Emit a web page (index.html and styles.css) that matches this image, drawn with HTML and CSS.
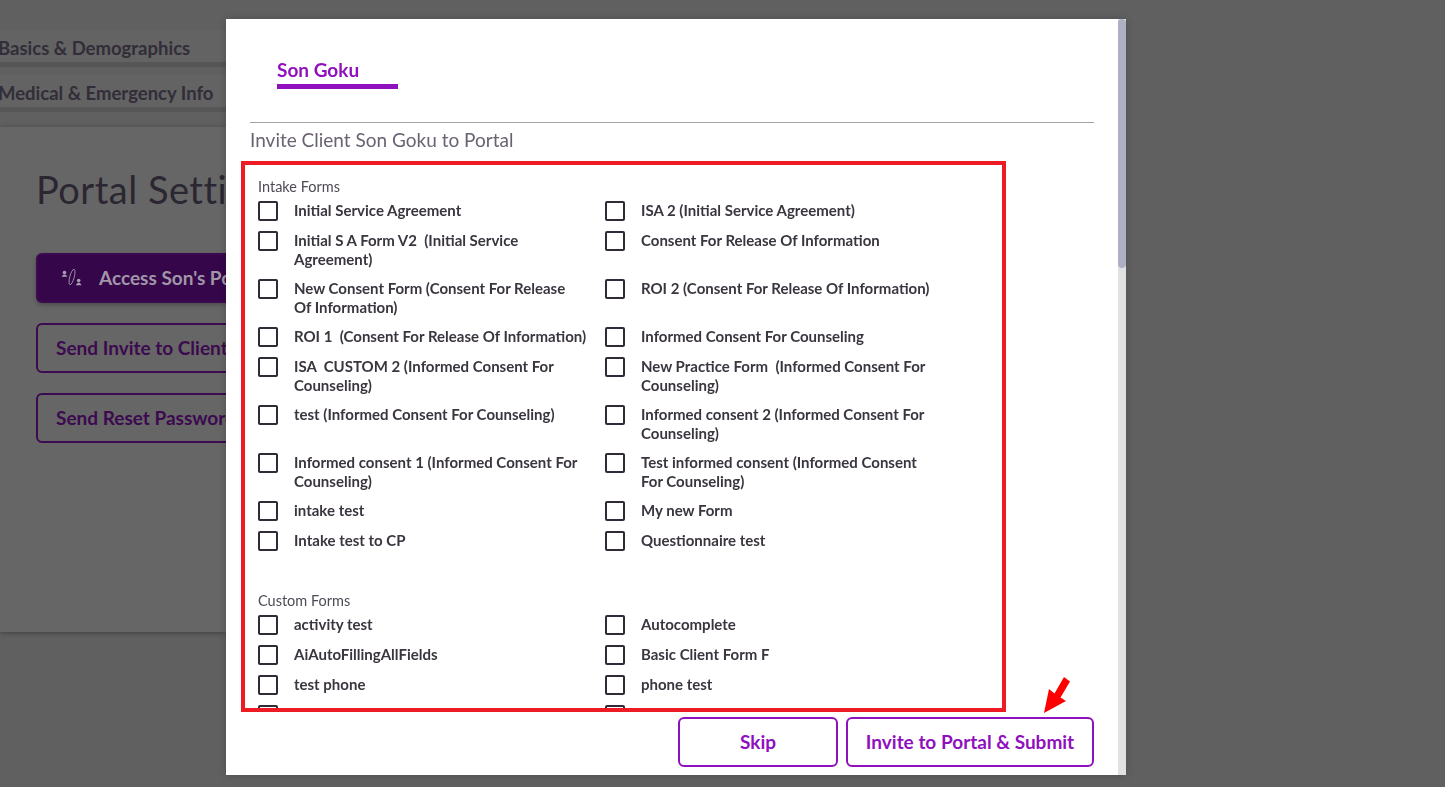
FILE: index.html
```html
<!DOCTYPE html>
<html lang="en">
<head>
<meta charset="utf-8">
<title>Portal Settings</title>
<link rel="stylesheet" href="styles.css">
</head>
<body>
<main class="page">
  <nav class="side-tabs">
    <div class="side-tab">Basics &amp; Demographics</div>
    <div class="side-tab">Medical &amp; Emergency Info</div>
  </nav>
  <section class="portal-card">
    <h1 class="portal-title">Portal Settings</h1>
    <div class="portal-actions">
      <button class="portal-btn portal-btn-solid">
        <svg class="portal-icon" viewBox="0 0 22 20" fill="none" stroke="#a89eb0" stroke-width="0.800"><circle cx="3.500" cy="4.500" r="1.800" fill="#a89eb0" stroke="none"/><path d="M0.500 8.800 L2.500 6.500 H4.500 L6.500 8.800 Z" fill="#a89eb0" stroke="none"/><ellipse cx="11" cy="9" rx="2.200" ry="8" transform="rotate(15 11 9)"/><circle cx="17.700" cy="12.500" r="1.800" fill="#a89eb0" stroke="none"/><path d="M14.700 17.200 L16.700 14.800 H18.700 L20.700 17.200 Z" fill="#a89eb0" stroke="none"/></svg>
        Access Son's Portal
      </button>
      <button class="portal-btn">Send Invite to Client</button>
      <button class="portal-btn">Send Reset Password</button>
    </div>
  </section>
</main>
<div class="overlay">
  <div class="modal">
    <div class="modal-body">
      <div class="modal-tabs"><span class="modal-tab">Son Goku</span></div>
      <h2 class="modal-heading">Invite Client Son Goku to Portal</h2>
      <div class="forms-box">
        <h3 class="forms-label">Intake Forms</h3>
        <div class="forms-grid">
          <label class="form-item"><span class="check"></span><span class="form-name">Initial Service Agreement</span></label>
          <label class="form-item"><span class="check"></span><span class="form-name">ISA 2 (Initial Service Agreement)</span></label>
          <label class="form-item"><span class="check"></span><span class="form-name">Initial S A Form V2&nbsp; (Initial Service<br>Agreement)</span></label>
          <label class="form-item"><span class="check"></span><span class="form-name">Consent For Release Of Information</span></label>
          <label class="form-item"><span class="check"></span><span class="form-name">New Consent Form (Consent For Release<br>Of Information)</span></label>
          <label class="form-item"><span class="check"></span><span class="form-name">ROI 2 (Consent For Release Of Information)</span></label>
          <label class="form-item"><span class="check"></span><span class="form-name">ROI 1&nbsp; (Consent For Release Of Information)</span></label>
          <label class="form-item"><span class="check"></span><span class="form-name">Informed Consent For Counseling</span></label>
          <label class="form-item"><span class="check"></span><span class="form-name">ISA&nbsp; CUSTOM 2 (Informed Consent For<br>Counseling)</span></label>
          <label class="form-item"><span class="check"></span><span class="form-name">New Practice Form&nbsp; (Informed Consent For<br>Counseling)</span></label>
          <label class="form-item"><span class="check"></span><span class="form-name">test (Informed Consent For Counseling)</span></label>
          <label class="form-item"><span class="check"></span><span class="form-name">Informed consent 2 (Informed Consent For<br>Counseling)</span></label>
          <label class="form-item"><span class="check"></span><span class="form-name">Informed consent 1 (Informed Consent For<br>Counseling)</span></label>
          <label class="form-item"><span class="check"></span><span class="form-name">Test informed consent (Informed Consent<br>For Counseling)</span></label>
          <label class="form-item"><span class="check"></span><span class="form-name">intake test</span></label>
          <label class="form-item"><span class="check"></span><span class="form-name">My new Form</span></label>
          <label class="form-item"><span class="check"></span><span class="form-name">Intake test to CP</span></label>
          <label class="form-item"><span class="check"></span><span class="form-name">Questionnaire test</span></label>
        </div>
        <h3 class="forms-label forms-label-second">Custom Forms</h3>
        <div class="forms-grid">
          <label class="form-item"><span class="check"></span><span class="form-name">activity test</span></label>
          <label class="form-item"><span class="check"></span><span class="form-name">Autocomplete</span></label>
          <label class="form-item"><span class="check"></span><span class="form-name">AiAutoFillingAllFields</span></label>
          <label class="form-item"><span class="check"></span><span class="form-name">Basic Client Form F</span></label>
          <label class="form-item"><span class="check"></span><span class="form-name">test phone</span></label>
          <label class="form-item"><span class="check"></span><span class="form-name">phone test</span></label>
          <label class="form-item"><span class="check"></span><span class="form-name"></span></label>
          <label class="form-item"><span class="check"></span><span class="form-name"></span></label>
        </div>
      </div>
      <div class="modal-footer">
        <button class="modal-btn modal-btn-skip">Skip</button>
        <button class="modal-btn modal-btn-submit">Invite to Portal &amp; Submit</button>
        <svg class="arrow" viewBox="0 0 26 36"><path d="M0 36 L5 12 L10.500 16.500 L20 0 L26 4.500 L16.500 20.500 L22 24 Z" fill="#ff0000"/></svg>
      </div>
    </div>
    <div class="scrollbar"><div class="scroll-thumb"></div></div>
  </div>
</div>
</body>
</html>
```
FILE: styles.css
```css
* { box-sizing: border-box; }
html, body { margin: 0; height: 100%; overflow: hidden; }
body { background: #606060; font-family: Lato, "Noto Sans", sans-serif; color: #2f2a35; }
.page { height: 787px; padding-top: 30px; }
.side-tabs { display: flex; flex-direction: column; width: 226px; }
.side-tab { height: 37px; margin-bottom: 8px; padding-top: 6px; font-size: 18.500px; font-weight: 700; line-height: 24px; color: #322d38; white-space: nowrap; border-bottom: 5px solid #565656; text-indent: -2px; background: #636363; }
.portal-card { height: 505px; margin-top: 7px; width: 226px; background: #666; box-shadow: 0 1px 5px rgba(0,0,0,.35); padding: 37px 0 0 36px; overflow: hidden; white-space: nowrap; }
.portal-title { margin: 0 0 39px; font-size: 38px; font-weight: 400; line-height: 50px; letter-spacing: .5px; color: #2b2631; }
.portal-actions { display: flex; flex-direction: column; gap: 20px; width: 300px; }
.portal-btn { height: 50px; width: 300px; display: flex; align-items: center; padding: 0 18px 2px; background: transparent; border: 2px solid #3c0a4f; border-radius: 6px; font: 700 19px Lato, sans-serif; color: #3c0a4f; }
.portal-btn-solid { background: #35074a; color: #a096a8; padding: 0 0 2px 23px; gap: 16px; box-shadow: 0 2px 4px rgba(0,0,0,.25); }
.portal-icon { width: 22px; height: 20px; flex: none; margin-top: 2px; }
.overlay { position: fixed; inset: 0; padding: 19px 0 12px 226px; }
.modal { position: relative; width: 900px; height: 756px; background: #fff; display: flex; box-shadow: 0 0 8px rgba(0,0,0,.2); }
.modal-body { flex: 1; padding: 0 24px 0 15px; min-width: 0; }
.modal-tabs { height: 104px; margin-left: 9px; padding: 37px 0 0 27px; border-bottom: 1px solid #a3a3a3; }
.modal-tab { display: inline-block; width: 121px; height: 33px; font-size: 19px; font-weight: 700; line-height: 27px; color: #8f10bd; border-bottom: 5px solid #8f10bd; }
.modal-heading { margin: 4px 0 0 9px; height: 34px; font-size: 19px; font-weight: 400; line-height: 26px; color: #6a6272; }
.forms-box { width: 765px; height: 551px; border: 4px solid #ed1c24; padding: 12px 13px 0; overflow: hidden; }
.forms-label { margin: 0; height: 24px; font-size: 14.500px; font-weight: 400; line-height: 19px; color: #4f4a55; }
.forms-label-second { margin-top: 30px; }
.forms-grid { display: grid; grid-template-columns: 347px 347px; }
.form-item { display: flex; gap: 16px; min-height: 30px; padding-bottom: 10px; }
.check { flex: none; width: 20px; height: 20px; border: 2px solid #2f2a35; border-radius: 2px; }
.form-name { width: 310px; font-size: 15px; font-weight: 700; line-height: 19px; color: #3a353f; }
.modal-footer { position: relative; display: flex; justify-content: flex-end; gap: 8px; margin-top: 5px; }
.modal-btn { height: 50px; padding: 0 0 2px; background: #fff; border: 2px solid #8f10bd; border-radius: 6px; font: 700 19px Lato, sans-serif; color: #8f10bd; white-space: nowrap; }
.modal-btn-skip { width: 160px; }
.modal-btn-submit { width: 248px; }
.arrow { position: absolute; right: 24px; bottom: 54px; width: 26px; height: 36px; }
.scrollbar { flex: none; width: 8px; background: #e1e1e1; }
.scroll-thumb { height: 249px; background: #adb0c2; border-radius: 4px; }
```
